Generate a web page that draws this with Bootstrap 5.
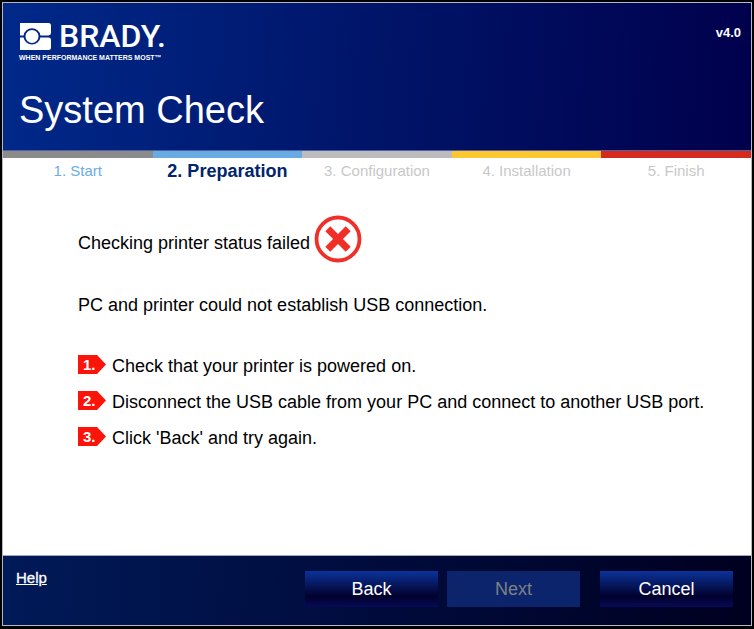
<!DOCTYPE html>
<html lang="en">
<head>
<meta charset="utf-8">
<meta name="viewport" content="width=device-width, initial-scale=1">
<title>System Check</title>
<link href="https://cdn.jsdelivr.net/npm/bootstrap@5.3.0/dist/css/bootstrap.min.css" rel="stylesheet">
<style>
  body { font-family: "Liberation Sans", Arial, sans-serif; font-size: 18px; line-height: 24px; color: #000; background: #000; }
  .app-shell { padding: 2px 2px 3px; }
  .app-window { border: 1px solid #b4b6c2; background: #fff; }
  .app-header { background: linear-gradient(94deg, #00298a, #001468 50%, #00004c); padding: 19px 10px 18px 16px; border-bottom: 1px solid #5060a0; }
  .brand-mark { width: 32px; height: 27px; }
  .brand-name { font-family: Roboto, "Liberation Sans", sans-serif; font-size: 32px; line-height: 28px; font-weight: 500; }
  .brand-tagline { font-size: 7px; line-height: 8px; font-weight: 700; margin-top: 4px; }
  .version { font-size: 13px; line-height: 22px; font-weight: 700; }
  .page-title { font-size: 38px; line-height: 44px; margin-top: 26px; }
  .step { border-top: 7px solid; font-size: 15px; line-height: 26px; }
  .step-gray { border-color: #8b8b8b; }
  .step-blue { border-color: #68abe3; }
  .step-silver { border-color: #bcbcbc; }
  .step-yellow { border-color: #ffc72f; }
  .step-red { border-color: #d62a1e; }
  .step-label { color: #c8c8c8; }
  .step-done { color: #6aace6; }
  .step-current { color: #00246e; font-size: 18px; font-weight: 700; }
  .content { padding: 30px 20px 20px 75px; }
  .status-icon { width: 48px; height: 48px; }
  .message { margin: 30px 0 37px; }
  .fix-list { gap: 12px; }
  .fix-number { width: 28px; height: 19px; margin: 1px 6px 0 0; background: #fb1409; clip-path: polygon(0 0, 68% 0, 100% 50%, 68% 100%, 0 100%); color: #fff; font-size: 15px; line-height: 19px; font-weight: 700; padding-left: 5px; }
  .app-footer { background: linear-gradient(94deg, #001a58, #000b3c 50%, #000020); border-top: 1px solid #a0a8c0; padding: 15px 18px 18px 13px; }
  .help-link { font-size: 15px; line-height: 14px; -webkit-text-stroke: .3px; }
  .btn-wizard { width: 133px; height: 36px; padding: 0; border: 0; border-radius: 0; color: #fff; font-size: 18px; line-height: 36px; background: linear-gradient(#0b339a, #020230 68%, #020230 74%, #070a58); }
  .btn-wizard:hover { color: #fff; background: linear-gradient(#1544b8, #020240 70%, #0a0e6c); }
  .btn-wizard:disabled { background: #0b246b; color: #7e8084; opacity: 1; }
  .button-row { gap: 9px; }
  .btn-cancel { margin-left: 11px; }
</style>
</head>
<body>
<div class="app-shell min-vh-100 d-flex">
  <div class="app-window flex-fill d-flex flex-column">
    <header class="app-header text-white">
      <div class="d-flex justify-content-between align-items-start">
        <div>
          <div class="d-flex align-items-center">
            <svg class="brand-mark me-2" viewBox="0 0 32 27" aria-hidden="true">
              <path fill="#fff" d="M1 0H29.500Q32 0 32 2.500V10Q32 12.400 29.500 12.400H21.400A8.500 8.500 0 0 0 4.600 12.400H1ZM1 14.400H4.600A8.500 8.500 0 0 0 21.400 14.400H29.500Q32 14.400 32 17V24.500Q32 27 29.500 27H1Z"/>
              <circle cx="13" cy="13.400" r="6.500" fill="#fff"/>
            </svg>
            <span class="brand-name">BRADY.</span>
          </div>
          <div class="brand-tagline text-nowrap">WHEN PERFORMANCE MATTERS MOST™</div>
        </div>
        <span class="version">v4.0</span>
      </div>
      <h1 class="page-title fw-normal mb-0">System Check</h1>
    </header>

    <ol class="list-unstyled row g-0 text-center mb-0">
      <li class="col step step-gray"><span class="step-label step-done">1. Start</span></li>
      <li class="col step step-blue" aria-current="step"><span class="step-label step-current">2. Preparation</span></li>
      <li class="col step step-silver"><span class="step-label">3. Configuration</span></li>
      <li class="col step step-yellow"><span class="step-label">4. Installation</span></li>
      <li class="col step step-red"><span class="step-label">5. Finish</span></li>
    </ol>

    <main class="content flex-grow-1">
      <div class="d-flex align-items-center">
        <span class="pt-2">Checking printer status failed</span>
        <svg class="status-icon ms-1" viewBox="0 0 48 48" role="img" aria-label="Failed">
          <circle cx="24" cy="24" r="21.500" fill="none" stroke="#f03028" stroke-width="3.800"/>
          <path d="M13.800 13.800L34.200 34.200M34.200 13.800L13.800 34.200" stroke="#f03028" stroke-width="7"/>
        </svg>
      </div>
      <p class="message">PC and printer could not establish USB connection.</p>
      <ol class="fix-list list-unstyled d-flex flex-column mb-0">
        <li class="d-flex"><span class="fix-number flex-shrink-0">1.</span><span>Check that your printer is powered on.</span></li>
        <li class="d-flex"><span class="fix-number flex-shrink-0">2.</span><span>Disconnect the USB cable from your PC and connect to another USB port.</span></li>
        <li class="d-flex"><span class="fix-number flex-shrink-0">3.</span><span>Click 'Back' and try again.</span></li>
      </ol>
    </main>

    <footer class="app-footer d-flex justify-content-between align-items-start">
      <a class="help-link text-white" href="#help">Help</a>
      <div class="button-row d-flex">
        <button type="button" class="btn btn-wizard">Back</button>
        <button type="button" class="btn btn-wizard" disabled>Next</button>
        <button type="button" class="btn btn-wizard btn-cancel">Cancel</button>
      </div>
    </footer>
  </div>
</div>
<script src="https://cdn.jsdelivr.net/npm/bootstrap@5.3.0/dist/js/bootstrap.bundle.min.js"></script>
</body>
</html>
